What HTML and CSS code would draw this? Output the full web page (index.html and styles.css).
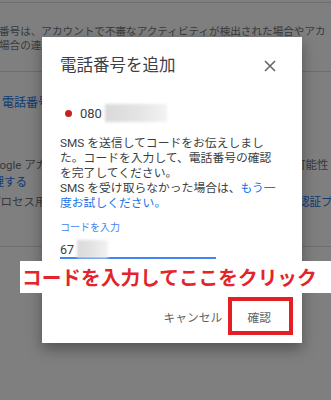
FILE: index.html
```html
<!DOCTYPE html>
<html lang="ja">
<head>
    <meta charset="UTF-8">
    <meta name="viewport" content="width=device-width, initial-scale=1.0">
    <title>電話番号を追加</title>
    <link rel="stylesheet" href="styles.css">
</head>
<body>

    <!-- pagina de fundo -->
    <div class="page">
        <div class="topline"></div>
        <p class="intro">番号は、アカウントで不審なアクティビティが検出された場合やアカ<br>場合の連絡に使用されます。</p>
        <div class="divider"></div>
        <a class="bg-link phone-link" href="#">電話番号を追加</a>

        <div class="bg-row row-a">
            <span class="bg-left"><span class="shift-go">Google アカウントのセキュリティ</span></span>
            <span class="bg-right">可能性</span>
        </div>
        <div class="bg-row">
            <span class="bg-left"><a class="bg-link shift-kan" href="#">管理する</a></span>
        </div>
        <div class="bg-row row-c">
            <span class="bg-left"><span class="shift-pu">プロセス用の電話</span></span>
            <span class="bg-right right-c"><a class="bg-link" href="#">認証プ</a></span>
        </div>
        <div class="divider divider-2"></div>
    </div>

    <div class="overlay"></div>

    <!-- dialogo -->
    <div class="dialog">
        <div class="dialog-head">
            <h2 class="dialog-title">電話番号を追加</h2>
            <button class="close" aria-label="閉じる">
                <svg width="12" height="12" viewBox="0 0 12 12"><path d="M1 1L11 11M11 1L1 11" stroke="#5f6368" stroke-width="1.5" fill="none"/></svg>
            </button>
        </div>

        <div class="phone">
            <span class="dot"></span>
            <span class="num">080</span>
            <span class="blur phone-blur"></span>
        </div>

        <p class="msg">SMS を送信してコードをお伝えしました。コードを入力して、電話番号の確認を完了してください。<br>SMS を受け取らなかった場合は、<a href="#">もう一度お試しください。</a></p>

        <div class="label">コードを入力</div>
        <div class="code">
            <span>67</span>
            <span class="blur code-blur"></span>
        </div>

        <div class="actions">
            <button class="btn">キャンセル</button>
            <button class="btn">確認</button>
        </div>
    </div>

    <!-- anotacoes -->
    <div class="banner">コードを入力してここをクリック</div>
    <div class="redbox"></div>

</body>
</html>
```

FILE: styles.css
```css
body {
    margin: 0;
    width: 331px;
    height: 400px;
    overflow: hidden;
    position: relative;
    background-color: white;
    font-family: Roboto, "Noto Sans CJK JP", sans-serif;
    color: #3c4043;
}

/* fundo */
.page {
    padding-top: 2px;
    color: #70757a;
    overflow: hidden;
}

.topline {
    border-top: 1px solid #dadce0;
}

.intro {
    margin: 22px 0 0 -1px;
    font-size: 10.6px;
    line-height: 13.5px;
    white-space: nowrap;
}

.divider {
    margin-top: 19px;
    border-top: 1px solid #dadce0;
}

.bg-link {
    color: #1a73e8;
    text-decoration: none;
}

.phone-link {
    display: block;
    margin-top: 23px;
    margin-left: 2px;
    font-size: 12px;
    line-height: 16px;
    white-space: nowrap;
}

.bg-row {
    display: flex;
    font-size: 11.5px;
    line-height: 16.5px;
    white-space: nowrap;
}

.row-a {
    margin-top: 46px;
}

.row-c {
    margin-top: 4px;
    line-height: 16px;
}

.bg-left {
    width: 294px;
    flex-shrink: 0;
    overflow: hidden;
}

.bg-right {
    flex-shrink: 0;
}

.right-c {
    margin-left: 4px;
}

.shift-go {
    display: inline-block;
    margin-left: -15px;
}

.shift-kan {
    display: inline-block;
    margin-left: -19px;
}

.shift-pu {
    display: inline-block;
    margin-left: -11px;
}

.divider-2 {
    margin-top: 36px;
}

.overlay {
    position: absolute;
    top: 0;
    left: 0;
    right: 0;
    bottom: 0;
    background-color: rgba(0, 0, 0, 0.5);
}

/* dialogo */
.dialog {
    position: absolute;
    left: 42px;
    top: 37px;
    width: 260px;
    height: 306px;
    box-sizing: border-box;
    padding: 18px 0 0 18px;
    background-color: white;
    box-shadow: 0 6px 14px rgba(0, 0, 0, 0.35);
    display: flex;
    flex-direction: column;
}

.dialog-head {
    display: flex;
    align-items: center;
    justify-content: space-between;
    padding-right: 26px;
}

.dialog-title {
    margin: 0;
    font-size: 16.5px;
    font-weight: normal;
    line-height: 22px;
    color: #3c4043;
}

.close {
    border: none;
    background: none;
    padding: 0;
    width: 12px;
    height: 12px;
    display: flex;
}

.phone {
    display: flex;
    align-items: center;
    height: 18px;
    margin-top: 27px;
    font-size: 13px;
    color: #3c4043;
}

.dot {
    width: 7px;
    height: 7px;
    border-radius: 50%;
    background-color: #c5221f;
    margin-left: 5px;
    margin-right: 8px;
}

.blur {
    display: inline-block;
    height: 18px;
    background: linear-gradient(90deg, #d9d9d9, #e4e4e4 55%, #f3f3f3);
    filter: blur(1.5px);
}

.phone-blur {
    width: 62px;
    margin-left: 3px;
}

.msg {
    margin: 14px 0 0;
    width: 218px;
    font-size: 11.8px;
    line-height: 15px;
    color: #3c4043;
}

.msg a {
    color: #1a73e8;
    text-decoration: none;
}

.label {
    margin-top: 10px;
    font-size: 10px;
    line-height: 14px;
    color: #4285f4;
}

.code {
    display: flex;
    align-items: center;
    width: 156px;
    height: 16px;
    margin-top: 6px;
    font-size: 12.5px;
    color: #3c4043;
    border-bottom: 2px solid #4285f4;
}

.code-blur {
    width: 31px;
    margin-left: 3px;
}

.actions {
    margin-top: auto;
    display: flex;
    justify-content: flex-end;
    gap: 9px;
    padding: 0 23px 9px 0;
}

.btn {
    border: none;
    background: none;
    padding: 0 8px;
    height: 36px;
    font-family: Roboto, "Noto Sans CJK JP", sans-serif;
    font-size: 11.8px;
    color: #5f6368;
}

/* anotacoes */
.banner {
    position: absolute;
    left: 20px;
    top: 261px;
    width: 311px;
    height: 32px;
    box-sizing: border-box;
    padding-left: 2px;
    background-color: white;
    color: #e3242b;
    font-family: "Noto Sans CJK JP", sans-serif;
    font-size: 19.7px;
    font-weight: bold;
    line-height: 32px;
    white-space: nowrap;
}

.redbox {
    position: absolute;
    left: 228px;
    top: 297px;
    width: 65px;
    height: 38px;
    box-sizing: border-box;
    border: 4.5px solid #e31e24;
}
```
